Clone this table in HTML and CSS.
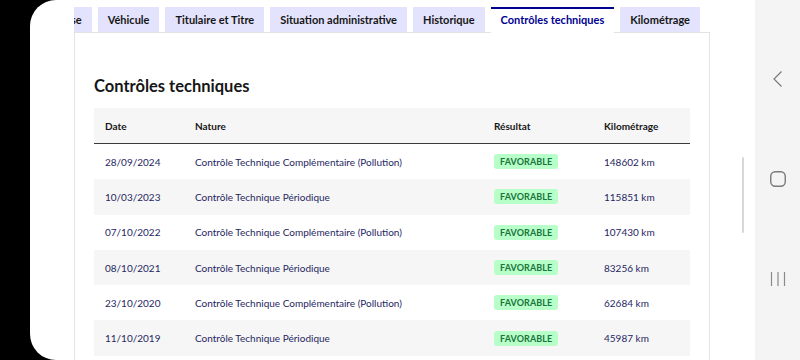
FILE: index.html
```html
<!DOCTYPE html>
<html lang="fr">
<head>
<meta charset="utf-8">
<title>Contrôles techniques</title>
<link rel="stylesheet" href="styles.css">
</head>
<body>
<div class="bezel"></div>
<div class="screen">
  <div class="page">
    <div class="tabs">
      <div class="tab">Synthèse</div>
      <div class="tab">Véhicule</div>
      <div class="tab">Titulaire et Titre</div>
      <div class="tab">Situation administrative</div>
      <div class="tab">Historique</div>
      <div class="tab active">Contrôles techniques</div>
      <div class="tab">Kilométrage</div>
    </div>
    <div class="panel">
      <h2 class="title">Contrôles techniques</h2>
      <table class="ct">
        <colgroup>
          <col class="c-date"><col class="c-nature"><col class="c-res"><col class="c-km">
        </colgroup>
        <thead>
          <tr><th>Date</th><th>Nature</th><th>Résultat</th><th>Kilométrage</th></tr>
        </thead>
        <tbody>
          <tr><td>28/09/2024</td><td>Contrôle Technique Complémentaire (Pollution)</td><td><span class="badge">Favorable</span></td><td>148602 km</td></tr>
          <tr><td>10/03/2023</td><td>Contrôle Technique Périodique</td><td><span class="badge">Favorable</span></td><td>115851 km</td></tr>
          <tr><td>07/10/2022</td><td>Contrôle Technique Complémentaire (Pollution)</td><td><span class="badge">Favorable</span></td><td>107430 km</td></tr>
          <tr><td>08/10/2021</td><td>Contrôle Technique Périodique</td><td><span class="badge">Favorable</span></td><td>83256 km</td></tr>
          <tr><td>23/10/2020</td><td>Contrôle Technique Complémentaire (Pollution)</td><td><span class="badge">Favorable</span></td><td>62684 km</td></tr>
          <tr><td>11/10/2019</td><td>Contrôle Technique Périodique</td><td><span class="badge">Favorable</span></td><td>45987 km</td></tr>
        </tbody>
      </table>
    </div>
    <div class="scroll-thumb"></div>
  </div>
  <nav class="navbar">
    <svg class="nav-ico" width="16" height="16" viewBox="0 0 16 16"><path d="M11.5 0.5 L4 8 L11.5 15.5" fill="none" stroke="#7a7a7a" stroke-width="1.2"/></svg>
    <svg class="nav-ico" width="16" height="16" viewBox="0 0 16 16"><rect x="0.75" y="0.75" width="14.5" height="14.5" rx="4.5" fill="none" stroke="#7a7a7a" stroke-width="1.4"/></svg>
    <svg class="nav-ico" width="16" height="16" viewBox="0 0 16 16"><path d="M1.5 1 V15 M8 1 V15 M14.5 1 V15" fill="none" stroke="#8a8a8a" stroke-width="1.2"/></svg>
  </nav>
</div>
</body>
</html>
```
FILE: styles.css
```css
html, body {
  margin: 0;
  padding: 0;
}
body {
  width: 800px;
  height: 360px;
  overflow: hidden;
  background: #000;
  display: flex;
  font-family: "Lato", "Noto Sans", sans-serif;
  color: #161616;
}
.bezel {
  width: 30px;
  flex: none;
}
.screen {
  flex: 1;
  display: flex;
  background: #fff;
  border-radius: 26px 0 0 26px;
  overflow: hidden;
}
.page {
  position: relative;
  width: 725px;
  flex: none;
  padding: 7px 0 0 44px;
  box-sizing: border-box;
}
/* tab list scrolled to its end: items overflow on the start side */
.tabs {
  width: 636px;
  box-sizing: border-box;
  padding-right: 10px;
  display: flex;
  justify-content: flex-end;
  gap: 6px;
  overflow: hidden;
  position: relative;
  z-index: 1;
  margin-bottom: -1px;
}
.tab {
  flex: none;
  height: 25px;
  line-height: 25px;
  padding: 0 10px;
  background: #e3e3fd;
  font-size: 11px;
  font-weight: 700;
  color: #161616;
  white-space: nowrap;
  box-sizing: border-box;
}
.tab.active {
  background: #fff;
  color: #000091;
  border-top: 2px solid #000091;
  line-height: 22px;
  height: 26px;
}
.panel {
  width: 636px;
  box-sizing: border-box;
  border: 1px solid #e3e3e3;
  border-bottom: none;
  padding: 42px 19px 0;
  height: 340px;
}
.title {
  margin: 0 0 11px;
  font-size: 16.5px;
  line-height: 22px;
  font-weight: 700;
  color: #161616;
}
.ct {
  width: 596px;
  table-layout: fixed;
  border-collapse: collapse;
  font-size: 10px;
}
.c-date { width: 90px; }
.c-nature { width: 299px; }
.c-res { width: 110px; }
.c-km { width: 97px; }
.ct th {
  text-align: left;
  font-weight: 700;
  color: #161616;
  background: #f6f6f6;
  height: 35px;
  padding: 0 11px;
  border-bottom: 1px solid #3a3a3a;
}
.ct td {
  height: 35.3px;
  padding: 0 11px;
  color: #262662;
  white-space: nowrap;
}
.ct tbody tr:nth-child(even) td {
  background: #f6f6f6;
}
.badge {
  display: inline-block;
  background: #b8fec9;
  color: #18753c;
  font-weight: 700;
  font-size: 9px;
  text-transform: uppercase;
  line-height: 15px;
  padding: 0 6px;
  border-radius: 3px;
  letter-spacing: 0.1px;
}
.scroll-thumb {
  position: absolute;
  left: 712px;
  top: 157px;
  width: 2px;
  height: 76px;
  background: #d8d8d8;
  border-radius: 1px;
}
.navbar {
  flex: 1;
  background: #f4f4f4;
  display: flex;
  flex-direction: column;
  align-items: center;
  padding-top: 71px;
  gap: 84px;
}
.nav-ico {
  display: block;
}
```
